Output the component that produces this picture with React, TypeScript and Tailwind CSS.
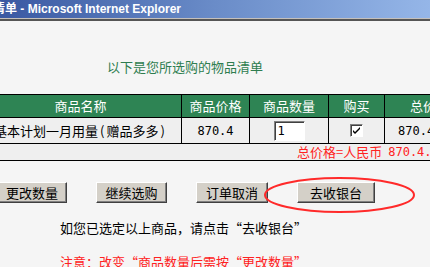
import React from "react";

const cjk = { fontFamily: '"Noto Sans CJK SC", "Noto Sans", sans-serif' };
const mono = { fontFamily: '"DejaVu Sans Mono", "Liberation Mono", monospace' };

function Btn({ w, ml, children }: { w: string; ml: string; children: React.ReactNode }) {
  return (
    <div
      className={`${w} ${ml} h-[21px] shrink-0 flex items-center justify-center bg-[#d4d0c8] border-t border-l border-t-white border-l-white border-r border-b border-r-[#404040] border-b-[#404040] shadow-[inset_-1px_-1px_0_#808080] text-[13px] leading-[16px] text-black`}
    >
      {children}
    </div>
  );
}

export default function App() {
  return (
    <div className="relative w-[430px] h-[267px] overflow-hidden bg-[#f5f5f5]" style={cjk}>
      {/* title bar */}
      <div className="h-[18px] bg-gradient-to-r from-[#3a58a2] via-[#6a8cc8] to-[#95b6e8] flex items-center overflow-hidden">
        <div
          className="ml-[-7px] whitespace-nowrap text-white font-bold text-[12px] leading-[18px]"
          style={{ fontFamily: '"Liberation Sans", "Noto Sans CJK SC", sans-serif' }}
        >
          清单 - Microsoft Internet Explorer
        </div>
      </div>
      <div className="h-px bg-[#c4c0bc]" />
      <div className="h-[2px] bg-[#555555]" />

      {/* heading */}
      <div className="mt-[38px] pl-[107px] text-[13px] leading-[16px] text-[#2e7d4f] whitespace-nowrap">
        以下是您所选购的物品清单
      </div>

      {/* table */}
      <div className="mt-[19px] ml-[-20px] w-[480px] border-t border-b border-black">
        <div className="flex h-[23px] bg-[#2e8454] text-white text-[13px] leading-[16px] border-b border-black">
          <div className="w-[202px] shrink-0 border-r border-black flex items-center justify-center">商品名称</div>
          <div className="w-[68px] shrink-0 border-r border-black flex items-center justify-center">商品价格</div>
          <div className="w-[79px] shrink-0 border-r border-black flex items-center justify-center">商品数量</div>
          <div className="w-[56px] shrink-0 border-r border-black flex items-center justify-center">购买</div>
          <div className="w-[76px] shrink-0 flex items-center justify-center">总价</div>
        </div>
        <div className="flex h-[26px] bg-[#efefef] text-black text-[13px] leading-[16px] border-b border-black">
          <div className="w-[202px] shrink-0 border-r border-black flex items-center justify-center whitespace-nowrap">
            基本计划一月用量<span className="px-[2px]">(</span>赠品多多<span className="px-[2px]">)</span>
          </div>
          <div className="w-[68px] shrink-0 border-r border-black flex items-center justify-center">
            <span className="text-[12px]" style={mono}>870.4</span>
          </div>
          <div className="w-[79px] shrink-0 border-r border-black flex items-center justify-center">
            <div className="w-[31px] h-[20px] bg-white border-t border-l border-t-[#808080] border-l-[#808080] border-b border-r border-b-white border-r-white shadow-[inset_1px_1px_0_#404040] pl-[3px] text-[12px] leading-[18px]" style={mono}>
              1
            </div>
          </div>
          <div className="w-[56px] shrink-0 border-r border-black flex items-center justify-center">
            <div className="w-[13px] h-[13px] bg-white border-t border-l border-t-[#808080] border-l-[#808080] border-b border-r border-b-white border-r-white shadow-[inset_1px_1px_0_#404040] flex items-center justify-center">
              <svg width="9" height="9" viewBox="0 0 9 9">
                <path d="M1 4 L3 6 L8 1 L8 3 L3 8 L1 6 Z" fill="#000" />
              </svg>
            </div>
          </div>
          <div className="w-[76px] shrink-0 flex items-center pl-[13px]">
            <span className="text-[12px]" style={mono}>870.4</span>
          </div>
        </div>
        <div className="h-[16px] bg-[#efefef] flex items-center pl-[317px] text-[13px] leading-[16px] text-[#ff2222] whitespace-nowrap">
          总价格=人民币
          <span className="ml-[6px] text-[12px]" style={mono}>870.4.</span>
        </div>
      </div>

      {/* buttons */}
      <div className="mt-[21px] ml-[-3px] flex">
        <Btn w="w-[70px]" ml="ml-0">更改数量</Btn>
        <Btn w="w-[71px]" ml="ml-[29px]">继续选购</Btn>
        <Btn w="w-[72px]" ml="ml-[29px]">订单取消</Btn>
        <Btn w="w-[78px]" ml="ml-[29px]">去收银台</Btn>
      </div>

      <div className="mt-[17px] pl-[60px] text-[13px] leading-[16px] text-black whitespace-nowrap">
        如您已选定以上商品，请点击“去收银台”
      </div>
      <div className="mt-[18px] pl-[60px] text-[13px] leading-[16px] text-[#ff2222] whitespace-nowrap">
        注意：改变“商品数量后需按“更改数量”
      </div>

      {/* red ellipse annotation */}
      <svg className="absolute left-[263px] top-[176px]" width="153" height="38" viewBox="0 0 153 38">
        <ellipse cx="76.5" cy="19" rx="74.5" ry="17" fill="none" stroke="#ff2a2a" strokeWidth="2" />
      </svg>
    </div>
  );
}
